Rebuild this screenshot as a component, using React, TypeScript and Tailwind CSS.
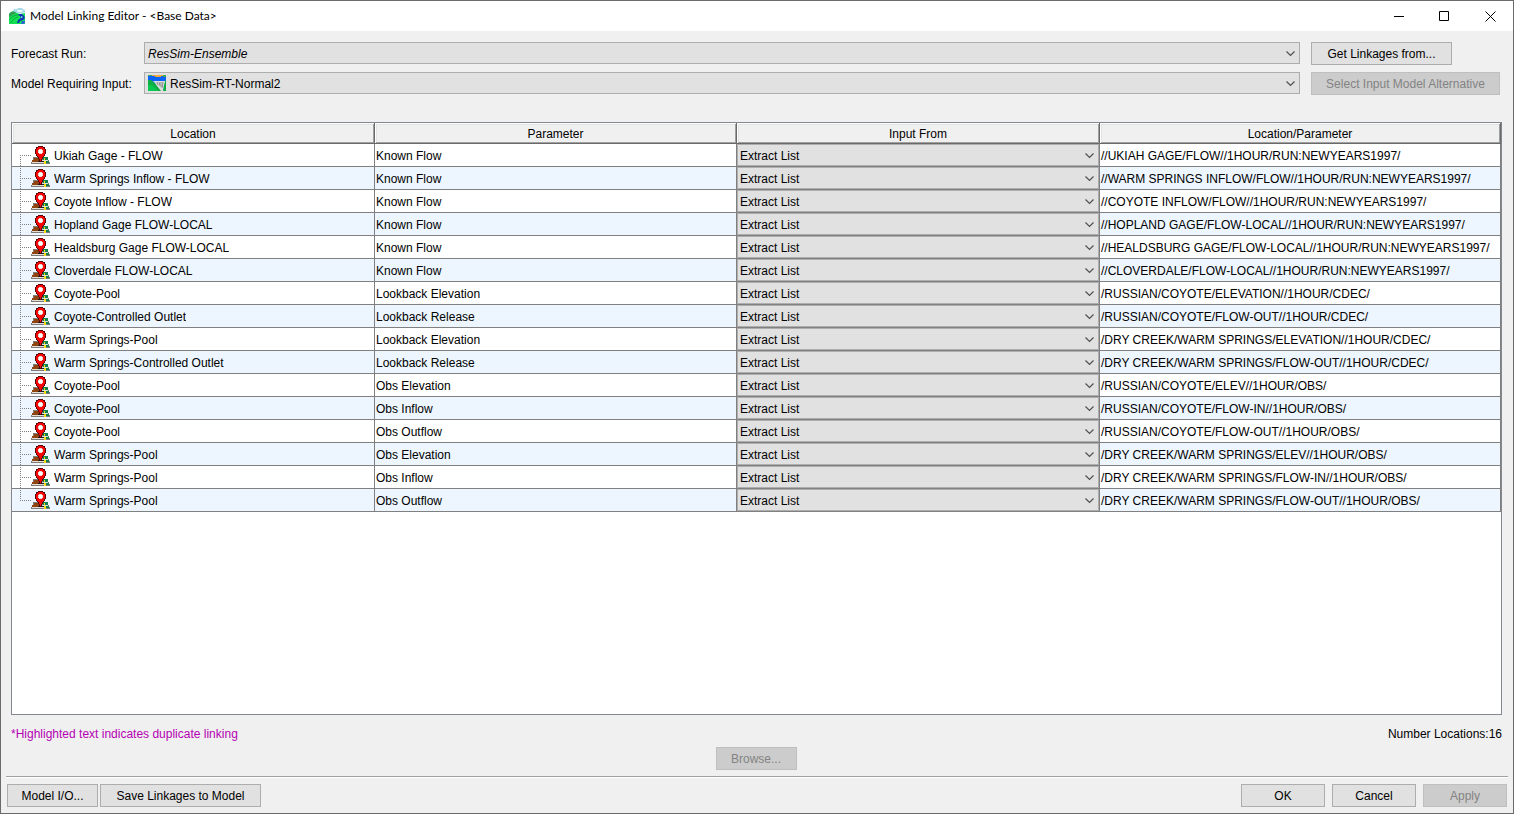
import type { ReactNode } from "react";
import clsx from "clsx";

type Linkage = {
  location: string;
  parameter: string;
  path: string;
};

const linkages: Linkage[] = [
  { location: "Ukiah Gage - FLOW", parameter: "Known Flow", path: "//UKIAH GAGE/FLOW//1HOUR/RUN:NEWYEARS1997/" },
  { location: "Warm Springs Inflow - FLOW", parameter: "Known Flow", path: "//WARM SPRINGS INFLOW/FLOW//1HOUR/RUN:NEWYEARS1997/" },
  { location: "Coyote Inflow - FLOW", parameter: "Known Flow", path: "//COYOTE INFLOW/FLOW//1HOUR/RUN:NEWYEARS1997/" },
  { location: "Hopland Gage FLOW-LOCAL", parameter: "Known Flow", path: "//HOPLAND GAGE/FLOW-LOCAL//1HOUR/RUN:NEWYEARS1997/" },
  { location: "Healdsburg Gage FLOW-LOCAL", parameter: "Known Flow", path: "//HEALDSBURG GAGE/FLOW-LOCAL//1HOUR/RUN:NEWYEARS1997/" },
  { location: "Cloverdale FLOW-LOCAL", parameter: "Known Flow", path: "//CLOVERDALE/FLOW-LOCAL//1HOUR/RUN:NEWYEARS1997/" },
  { location: "Coyote-Pool", parameter: "Lookback Elevation", path: "/RUSSIAN/COYOTE/ELEVATION//1HOUR/CDEC/" },
  { location: "Coyote-Controlled Outlet", parameter: "Lookback Release", path: "/RUSSIAN/COYOTE/FLOW-OUT//1HOUR/CDEC/" },
  { location: "Warm Springs-Pool", parameter: "Lookback Elevation", path: "/DRY CREEK/WARM SPRINGS/ELEVATION//1HOUR/CDEC/" },
  { location: "Warm Springs-Controlled Outlet", parameter: "Lookback Release", path: "/DRY CREEK/WARM SPRINGS/FLOW-OUT//1HOUR/CDEC/" },
  { location: "Coyote-Pool", parameter: "Obs Elevation", path: "/RUSSIAN/COYOTE/ELEV//1HOUR/OBS/" },
  { location: "Coyote-Pool", parameter: "Obs Inflow", path: "/RUSSIAN/COYOTE/FLOW-IN//1HOUR/OBS/" },
  { location: "Coyote-Pool", parameter: "Obs Outflow", path: "/RUSSIAN/COYOTE/FLOW-OUT//1HOUR/OBS/" },
  { location: "Warm Springs-Pool", parameter: "Obs Elevation", path: "/DRY CREEK/WARM SPRINGS/ELEV//1HOUR/OBS/" },
  { location: "Warm Springs-Pool", parameter: "Obs Inflow", path: "/DRY CREEK/WARM SPRINGS/FLOW-IN//1HOUR/OBS/" },
  { location: "Warm Springs-Pool", parameter: "Obs Outflow", path: "/DRY CREEK/WARM SPRINGS/FLOW-OUT//1HOUR/OBS/" },
];

const AppIcon = () => (
  <svg className="size-4 shrink-0" viewBox="0 0 16 16" aria-hidden="true">
    <path d="M0 6 2 4l3-1 3 2 3 1 5-1v11H0z" fill="#12e052" />
    <path d="M0 6 2 4l3-1 3 2-3 1-3 2-2 1z" fill="#2f9e54" />
    <path d="M1 11c3-3 5-4 8-4M2 15c2-4 4-5 7-6" stroke="#0fa53c" strokeWidth="1" fill="none" />
    <path d="M5 1h3l1-1h4l1 1 2 1v2l-2 1H8L6 4 4 3z" fill="#a9dbe8" />
    <path d="M8 2h5l1 1-2 1H9z" fill="#e9fbff" />
    <path d="M10 6h3l2 2 1 2-2 2-3 1-1 2H8l1-3 3-2-1-2-2-1z" fill="#1230b8" />
    <path d="M13 13h3v2l-2 1h-2z" fill="#2a62d8" />
    <path d="m12 8 2 1-1 1h-1z" fill="#79d8ee" />
  </svg>
);

const ModelIcon = () => (
  <svg className="h-4 w-[18px]" viewBox="0 0 18 16" aria-hidden="true">
    <path d="M0 0h18v16H0z" fill="#0a64fa" />
    <path d="M0 0h4v1H0zM15 0h3v2h-3z" fill="#3aa655" />
    <path d="M4 0h11v1h-2v1H7V1H4z" fill="#f2a93a" />
    <path d="M0 5h3l6 5 5 6H0zM18 5l-2 2-1 9h3z" fill="#0fae45" />
    <path d="M0 10h4l6 6H0z" fill="#06c84e" />
    <path d="M5 6h12v1l-1 3-1 6h-2L9 11 7 8z" fill="#dcdcdc" />
    <path d="m9 7 1 3m1-3 1 4m1-4v5m2-5-1 6" stroke="#8c9090" strokeWidth="1" fill="none" />
  </svg>
);

const GageIcon = () => (
  <svg className="h-[18px] w-[19px] shrink-0" viewBox="0 0 19 18" shapeRendering="crispEdges" aria-hidden="true">
    <path d="M2 11h15v3h1v2h1v2H0v-2h1v-2h1z" fill="#7d7a78" />
    <path d="M3 12h5v4H1v-2h2z" fill="#8f4410" />
    <path d="M1 16h12v1H1z" fill="#e4dfd6" />
    <path d="M12 11h5v3h-5zM15 15h3v2h-3z" fill="#14804c" />
    <path d="M11 14h6v1h-6z" fill="#d8e0d8" />
    <path d="M13 12h1v2h-1zM13 15h2v3h-2z" fill="#f7dc16" />
    <path d="M7 15h6v1H7z" fill="#1c1c1c" />
    <path
      d="M7 0h5v1h2v2h1v5h-1v2h-1v1h-1v2h-1v2h-1v1H9v-1H8v-2H7v-2H6v-1H5V8H4V3h1V1h2z"
      fill="#5a0606"
    />
    <path d="M7 1h5v1h1v1h1v5h-1v2h-1v1h-1v2h-1v2H9v-2H8v-2H7v-1H6V8H5V3h1V2h1z" fill="#fa0505" />
    <path d="M8 3h3v1h1v3h-1v1H8V7H7V4h1z" fill="#e9dada" />
    <path d="M8 4h3v3H8z" fill="#fff" />
  </svg>
);

const TreeBranch = ({ first, last }: { first: boolean; last: boolean }) => (
  <svg className="h-[22px] w-[19px] shrink-0" viewBox="0 0 19 22" shapeRendering="crispEdges" aria-hidden="true">
    <path
      d={clsx("M8 11.5H19", first ? "M8.5 11V22" : last ? "M8.5 1V12" : "M8.5 1V22")}
      stroke="#808080"
      strokeDasharray="1 1"
      fill="none"
    />
  </svg>
);

type ComboProps = {
  id?: string;
  label?: string;
  value: string;
  icon?: ReactNode;
  className?: string;
};

const Combo = ({ id, label, value, icon, className }: ComboProps) => (
  <div className="relative h-[22px] min-w-0 flex-1">
    <select
      id={id}
      aria-label={label}
      className={clsx(
        "block h-full w-full appearance-none border border-[#adadad] bg-[#e1e1e1] pt-[2px] pr-5 outline-none",
        icon ? "pl-[25px]" : className ?? "pl-[3px]"
      )}
    >
      <option>{value}</option>
    </select>
    {icon && <span className="pointer-events-none absolute top-[3px] left-1">{icon}</span>}
    <svg
      className="pointer-events-none absolute top-[9px] right-[5px] h-[6px] w-[9px]"
      viewBox="0 0 9 6"
      fill="none"
      stroke="#505050"
      strokeWidth="1.2"
      aria-hidden="true"
    >
      <path d="m.5 .5 4 4 4-4" />
    </svg>
  </div>
);

type ButtonProps = {
  children: ReactNode;
  disabled?: boolean;
  className?: string;
};

const Button = ({ children, disabled, className }: ButtonProps) => (
  <button
    type="button"
    disabled={disabled}
    className={clsx(
      "h-[23px] shrink-0 border text-center whitespace-nowrap",
      disabled ? "border-[#bfbfbf] bg-[#cccccc] text-[#838383]" : "border-[#adadad] bg-[#e1e1e1]",
      className
    )}
  >
    {children}
  </button>
);

const TitleBar = () => (
  <header className="flex h-[30px] items-center bg-white pl-2">
    <AppIcon />
    <h1 className="ml-[5px] flex-1 font-[Lato,'Open_Sans',sans-serif] text-[12px]">
      Model Linking Editor - &lt;Base Data&gt;
    </h1>
    <button type="button" aria-label="Minimize" className="flex h-full w-[45px] items-center justify-center">
      <svg className="size-[11px]" viewBox="0 0 11 11" stroke="#000" aria-hidden="true">
        <path d="M0 5.5h10" />
      </svg>
    </button>
    <button type="button" aria-label="Maximize" className="flex h-full w-[45px] items-center justify-center">
      <svg className="size-[11px]" viewBox="0 0 11 11" fill="none" stroke="#000" aria-hidden="true">
        <path d="M.5.5h9v9h-9z" />
      </svg>
    </button>
    <button type="button" aria-label="Close" className="flex h-full w-[46px] items-center justify-center">
      <svg className="size-[11px]" viewBox="0 0 11 11" stroke="#000" aria-hidden="true">
        <path d="m.5.5 10 10m0-10-10 10" />
      </svg>
    </button>
  </header>
);

const LinkageTable = () => (
  <table className="w-full table-fixed border-separate border-spacing-0">
    <colgroup>
      <col className="w-[363px]" />
      <col className="w-[362px]" />
      <col className="w-[363px]" />
      <col />
    </colgroup>
    <thead>
      <tr>
        {["Location", "Parameter", "Input From", "Location/Parameter"].map((title) => (
          <th
            key={title}
            className="h-[21px] border-r border-b border-[#696969] bg-[#f0f0f0] p-0 pt-[2px] font-normal shadow-[inset_1px_1px_#ffffff,inset_-1px_-1px_#a0a0a0,inset_2px_2px_#e3e3e3]"
          >
            {title}
          </th>
        ))}
      </tr>
    </thead>
    <tbody>
      {linkages.map((row, idx) => (
        <tr key={idx} className="bg-white even:bg-[#edf6ff]">
          <td className="border-r border-b border-[#808080] p-0">
            <div className="flex h-[22px] items-center">
              <TreeBranch first={idx === 0} last={idx === linkages.length - 1} />
              <GageIcon />
              <span className="ml-1 truncate pt-[2px]">{row.location}</span>
            </div>
          </td>
          <td className="truncate border-r border-b border-[#808080] p-0 pt-[2px] pl-px">{row.parameter}</td>
          <td className="border-r border-b border-[#808080] p-0">
            <Combo label={`Input from for ${row.location} ${row.parameter}`} value="Extract List" className="pl-[2px]" />
          </td>
          <td className="truncate border-r border-b border-[#808080] p-0 pt-[2px] pl-px">{row.path}</td>
        </tr>
      ))}
    </tbody>
  </table>
);

const App = () => {
  return (
    <div className="flex min-h-screen flex-col border border-[#6b6b6b] bg-[#f0f0f0] font-['Liberation_Sans',Arial,sans-serif] text-[12px] leading-4 text-black">
      <TitleBar />
      <main className="flex flex-1 flex-col px-[10px] pt-[11px]">
        <div className="grid grid-cols-[122px_1fr_190px] gap-x-[11px] gap-y-[7px] pr-[2px]">
          <label htmlFor="forecast-run" className="self-center whitespace-nowrap">
            Forecast Run:
          </label>
          <Combo id="forecast-run" value="ResSim-Ensemble" className="pl-[3px] italic" />
          <div className="flex">
            <Button className="w-[141px]">Get Linkages from...</Button>
          </div>
          <label htmlFor="model-input" className="self-center whitespace-nowrap">
            Model Requiring Input:
          </label>
          <Combo id="model-input" value="ResSim-RT-Normal2" icon={<ModelIcon />} />
          <div className="flex">
            <Button disabled className="w-[189px]">
              Select Input Model Alternative
            </Button>
          </div>
        </div>
        <section className="mt-[27px] mr-px flex-1 overflow-auto border border-[#828790] bg-white">
          <LinkageTable />
        </section>
        <div className="mt-[11px] mr-px flex justify-between">
          <p className="text-[#b400b4]">*Highlighted text indicates duplicate linking</p>
          <p>Number Locations:{linkages.length}</p>
        </div>
        <div className="mt-[5px] flex justify-center pr-[2px]">
          <Button disabled className="w-[81px]">
            Browse...
          </Button>
        </div>
      </main>
      <footer className="mx-[5px] mt-[6px] flex justify-between border-t border-[#a0a0a0] px-px pt-[7px] pb-[6px] shadow-[inset_0_1px_#ffffff]">
        <div className="flex gap-[2px]">
          <Button className="w-[91px]">Model I/O...</Button>
          <Button className="w-[161px]">Save Linkages to Model</Button>
        </div>
        <div className="flex gap-[7px]">
          <Button className="w-[84px]">OK</Button>
          <Button className="w-[84px]">Cancel</Button>
          <Button disabled className="w-[84px]">
            Apply
          </Button>
        </div>
      </footer>
    </div>
  );
};

export default App;
